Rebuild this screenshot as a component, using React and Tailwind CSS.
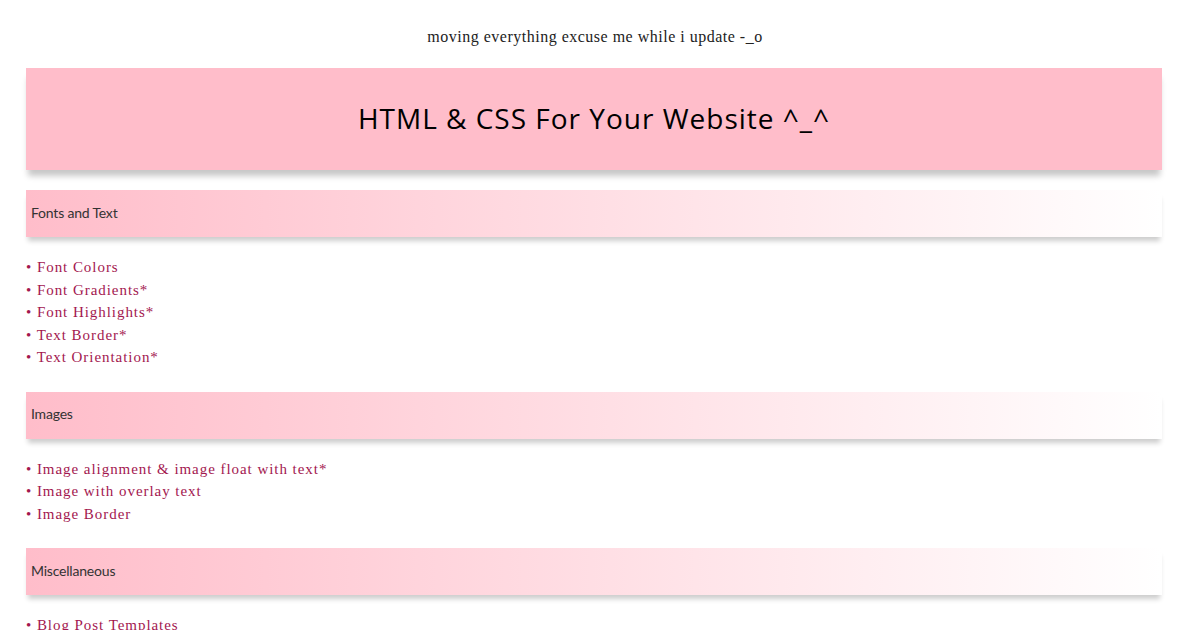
const sections = [
  {
    title: "Fonts and Text",
    items: ["Font Colors", "Font Gradients*", "Font Highlights*", "Text Border*", "Text Orientation*"],
  },
  {
    title: "Images",
    items: ["Image alignment & image float with text*", "Image with overlay text", "Image Border"],
  },
  {
    title: "Miscellaneous",
    items: ["Blog Post Templates", "Buttons", "Scroll Boxes"],
  },
];

const serif = { fontFamily: '"Liberation Serif", "Times New Roman", serif' };
const sans = { fontFamily: 'Lato, "Noto Sans", sans-serif' };
const title = { fontFamily: '"Open Sans", Lato, sans-serif' };

export default function App() {
  return (
    <div className="w-[1200px] h-[630px] overflow-hidden bg-white">
      <p
        className="pt-[27px] pr-[10px] text-center text-[16px] leading-[20px] tracking-[0.5px] text-[#222]"
        style={serif}
      >
        moving everything excuse me while i update -_o
      </p>

      <div className="ml-[26px] w-[1136px] mt-[21px]">
        <div className="h-[102px] bg-[#ffbdca] shadow-[0_8px_6px_-2px_rgba(0,0,0,0.22)] flex items-center justify-center">
          <h1 className="text-[28px] text-black tracking-[1px] pb-[2px]" style={title}>
            HTML &amp; CSS For Your Website ^_^
          </h1>
        </div>

        {sections.map((s) => (
          <div key={s.title} className="mt-[20px]">
            <div className="h-[47px] bg-gradient-to-r from-[#ffbdca] to-white shadow-[0_6px_5px_-2px_rgba(0,0,0,0.2)] flex items-center px-[5px] pb-[3px]">
              <span className="text-[14px] text-[#333] tracking-[-0.2px]" style={sans}>
                {s.title}
              </span>
            </div>
            <ul className="mt-[19px] mb-[23px]" style={serif}>
              {s.items.map((it) => (
                <li key={it} className="text-[15px] leading-[22.5px] tracking-[0.95px] text-[#a3174f]">
                  • {it}
                </li>
              ))}
            </ul>
          </div>
        ))}
      </div>
    </div>
  );
}
